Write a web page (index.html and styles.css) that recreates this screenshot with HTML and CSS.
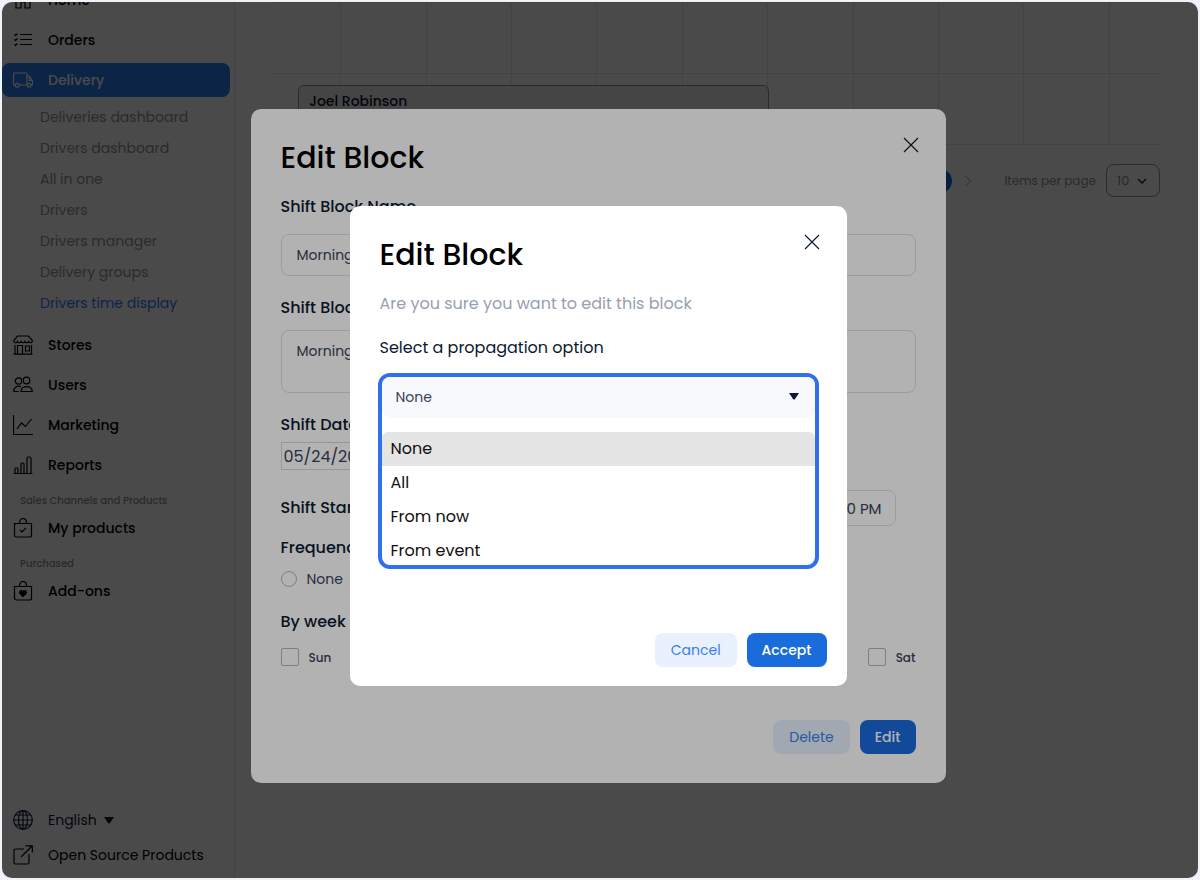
FILE: index.html
```html
<!DOCTYPE html>
<html lang="en">
<head>
    <meta charset="UTF-8">
    <meta name="viewport" content="width=device-width, initial-scale=1.0">
    <title>Drivers time display</title>
    <link rel="stylesheet" href="styles.css">
</head>
<body>
    <div class="app">
        <aside class="sidebar">
            <nav class="nav">
                <a class="nav-item" href="#">
                    <svg class="icon" viewBox="0 0 20 20"><path d="M3 8v10h5v-6h4v6h5V8M1 9l9-8 9 8"/></svg>
                    Home
                </a>
                <a class="nav-item" href="#">
                    <svg class="icon" viewBox="0 0 20 20"><path d="M7 4.500h12M7 9.500h12M7 14.500h12M1.500 4.500l1 1 2-2M1.500 9.500l1 1 2-2M1.500 14.500l1 1 2-2"/></svg>
                    Orders
                </a>
                <a class="nav-item active" href="#">
                    <svg class="icon" viewBox="0 0 20 20"><path d="M2.500 15H1.500a1 1 0 0 1-1-1V4a1 1 0 0 1 1-1H13a1 1 0 0 1 1 1v11H6M14 6h2.500l3 5v3.500h-1.500M16.500 6v4.500h3M14 15h.500"/><circle cx="4.200" cy="15.200" r="1.900"/><circle cx="16.200" cy="15.200" r="1.900"/></svg>
                    Delivery
                </a>
                <div class="subnav">
                    <a href="#">Deliveries dashboard</a>
                    <a href="#">Drivers dashboard</a>
                    <a href="#">All in one</a>
                    <a href="#">Drivers</a>
                    <a href="#">Drivers manager</a>
                    <a href="#">Delivery groups</a>
                    <a class="current" href="#">Drivers time display</a>
                </div>
                <a class="nav-item" href="#">
                    <svg class="icon" viewBox="0 0 20 20"><path d="M4.500 1h11L19.300 5.500v1a2 2 0 0 1-3.700 0 2 2 0 0 1-3.700 0 2 2 0 0 1-3.700 0 2 2 0 0 1-3.700 0 2 2 0 0 1-3.700 0v-1zM2 10v9M18.500 10v9M.500 19.200h19M4.500 19v-8.500h5V19M12.500 11h4v5h-4z"/></svg>
                    Stores
                </a>
                <a class="nav-item" href="#">
                    <svg class="icon" viewBox="0 0 20 20"><circle cx="5.500" cy="6" r="3.200"/><circle cx="13.500" cy="5.500" r="3.300"/><path d="M8 11.500c-4-1.500-7.300 1-7.300 5h5M8 16.500c0-6.500 11.300-6.500 11.300 0z"/></svg>
                    Users
                </a>
                <a class="nav-item" href="#">
                    <svg class="icon" viewBox="0 0 20 20"><path d="M.500 0v19.500H20M4 14l4.500-6 4 3.500 6-7.500"/></svg>
                    Marketing
                </a>
                <a class="nav-item" href="#">
                    <svg class="icon" viewBox="0 0 20 20"><path d="M.500 18.500h19M2 18.500v-4.500q0-1 1-1h1q1 0 1 1v4.500M8 18.500V9q0-1 1-1h1q1 0 1 1v9.500M14 18.500V3.500q0-1.500 1-1.500h1.500q1.500 0 1.500 1.500v15"/></svg>
                    Reports
                </a>
                <p class="nav-label">Sales Channels and Products</p>
                <a class="nav-item" href="#">
                    <svg class="icon" viewBox="0 0 20 20"><path d="M1.500 5.500h17V17a2 2 0 0 1-2 2h-13a2 2 0 0 1-2-2zM6.500 5c0-6 7-6 7 0M7 12l2 2 4-4"/></svg>
                    My products
                </a>
                <p class="nav-label">Purchased</p>
                <a class="nav-item" href="#">
                    <svg class="icon" viewBox="0 0 20 20"><path d="M1.500 5.500h17V17a2 2 0 0 1-2 2h-13a2 2 0 0 1-2-2zM6.500 5c0-6 7-6 7 0"/><path class="solid" d="M10 15.500l-3-3c-1.500-2 1.500-4 3-2 1.500-2 4.500 0 3 2z"/></svg>
                    Add-ons
                </a>
            </nav>
            <div class="nav-footer">
                <div class="nav-item language">
                    <svg class="icon" viewBox="0 0 20 20"><circle cx="10" cy="10" r="9.300"/><ellipse cx="10" cy="10" rx="4.500" ry="9.300"/><path d="M10 .700v18.600M.700 10h18.600M2.500 5h15M2.500 15h15"/></svg>
                    <select aria-label="Language">
                        <option>English</option>
                    </select>
                    <svg class="caret" viewBox="0 0 10 7"><path d="M0 0h10L6 6q-1 1-2 0z"/></svg>
                </div>
                <a class="nav-item" href="#">
                    <svg class="icon" viewBox="0 0 20 20"><path d="M11 4H2.500a1.500 1.500 0 0 0-1.500 1.500v12A1.500 1.500 0 0 0 2.500 19h12a1.500 1.500 0 0 0 1.500-1.500V9M8 12L19 1M12.500.800H19.300V7.500"/></svg>
                    Open Source Products
                </a>
            </div>
        </aside>

        <main class="main">
            <div class="timeline">
                <div class="slots">
                    <span></span><span></span><span></span><span></span><span></span><span></span><span></span><span></span><span></span><span></span><span></span>
                </div>
                <div class="slots">
                    <span></span><span></span><span></span><span></span><span></span><span></span><span></span><span></span><span></span><span></span><span></span>
                </div>
                <div class="block">Joel Robinson</div>
            </div>
            <div class="pagination">
                <button class="page" type="button">1</button>
                <button class="next" type="button" aria-label="Next page">
                    <svg viewBox="0 0 8 12"><path d="M1.500 1l5 5-5 5"/></svg>
                </button>
                <label for="per-page">Items per page</label>
                <div class="per-page">
                    <select id="per-page">
                        <option>10</option>
                    </select>
                    <svg viewBox="0 0 10 6"><path d="M1 1l4 4 4-4"/></svg>
                </div>
            </div>
        </main>

        <div class="overlay">
            <form class="modal modal-form">
                <div class="modal-header">
                    <h2>Edit Block</h2>
                    <button class="close" type="button" aria-label="Close">
                        <svg viewBox="0 0 16 16"><path d="M1 1l14 14M15 1L1 15"/></svg>
                    </button>
                </div>
                <label class="title" for="name">Shift Block Name</label>
                <input class="field" type="text" id="name" value="Morning">
                <label class="title" for="description">Shift Block Note</label>
                <textarea class="field" id="description">Morning</textarea>
                <label class="title" for="date">Shift Date</label>
                <input class="date" type="text" id="date" value="05/24/2023">
                <div class="time-row">
                    <label class="title" for="end">Shift Start</label>
                    <input class="field" type="text" id="end" value="05:00 PM">
                </div>
                <p class="title">Frequency</p>
                <label class="radio"><input type="radio" name="frequency">None</label>
                <p class="title">By week</p>
                <div class="days">
                    <label><input type="checkbox">Sun</label>
                    <label><input type="checkbox">Mon</label>
                    <label><input type="checkbox">Tue</label>
                    <label><input type="checkbox">Wed</label>
                    <label><input type="checkbox">Thu</label>
                    <label><input type="checkbox">Fri</label>
                    <label><input type="checkbox">Sat</label>
                </div>
                <div class="actions">
                    <button class="btn btn-light" type="button">Delete</button>
                    <button class="btn" type="button">Edit</button>
                </div>
            </form>
        </div>

        <div class="overlay overlay-top">
            <form class="modal modal-confirm">
                <div class="modal-header">
                    <h2>Edit Block</h2>
                    <button class="close" type="button" aria-label="Close">
                        <svg viewBox="0 0 16 16"><path d="M1 1l14 14M15 1L1 15"/></svg>
                    </button>
                </div>
                <p class="hint">Are you sure you want to edit this block</p>
                <label class="question" for="propagation">Select a propagation option</label>
                <div class="dropdown">
                    <div class="dropdown-field">
                        <select id="propagation">
                            <option>None</option>
                            <option>All</option>
                            <option>From now</option>
                            <option>From event</option>
                        </select>
                        <svg class="caret" viewBox="0 0 10 7"><path d="M0 0h10L6 6q-1 1-2 0z"/></svg>
                    </div>
                    <ul class="options" role="listbox" aria-label="Propagation options">
                        <li role="option" aria-selected="true">None</li>
                        <li role="option">All</li>
                        <li role="option">From now</li>
                        <li role="option">From event</li>
                    </ul>
                </div>
                <div class="actions">
                    <button class="btn btn-light" type="button">Cancel</button>
                    <button class="btn" type="button">Accept</button>
                </div>
            </form>
        </div>
    </div>
</body>
</html>
```
FILE: styles.css
```css
:root {
    --primary: #1a6bdb;
    --primary-light: #e9f1ff;
    --active: #2c7ef0;
    --ring: #3070ee;
    --navy: #0b1a33;
    --text: #3a4256;
    --muted: #96a0b0;
    --line: #e6e6e6;
    --radius: 8px;
}

* {
    margin: 0;
    padding: 0;
    box-sizing: border-box;
}

body {
    font-family: Poppins, Inter, sans-serif;
    font-size: 14px;
    line-height: 20px;
    background: #f0f2fa;
    color: #000;
    padding: 2px;
}

a {
    color: inherit;
    text-decoration: none;
}

input,
select,
textarea,
button {
    font: inherit;
    color: inherit;
    background: none;
    border: none;
}

select {
    appearance: none;
}

svg {
    display: block;
    fill: none;
    stroke: currentColor;
}

.app {
    position: relative;
    display: flex;
    height: calc(100vh - 4px);
    background: #fff;
    border-radius: 10px;
    overflow: hidden;
}

.sidebar {
    display: flex;
    flex-direction: column;
    width: 233px;
    border-right: 1px solid var(--line);
}

/* the menu is scrolled a little, so Home is cut at the top */
.nav {
    flex: 1;
    margin-top: -19px;
}

.nav-item {
    display: flex;
    align-items: center;
    gap: 15px;
    height: 34px;
    margin: 0 4px 6px 0;
    padding-left: 11px;
    border-radius: var(--radius);
    font-weight: 500;
}

.nav-item.active {
    background: var(--active);
    color: #fff;
}

.icon {
    width: 20px;
    height: 20px;
    stroke-width: 1.2;
}

.solid {
    fill: currentColor;
}

.caret {
    width: 10px;
    height: 7px;
    fill: currentColor;
    stroke: none;
}

.subnav {
    display: flex;
    flex-direction: column;
    margin: -1px 0 9px;
    padding-left: 38px;
    color: #8b93a2;
    line-height: 31px;
}

.subnav .current {
    color: var(--active);
}

.nav-label {
    margin: 11px 0 3px;
    padding-left: 18px;
    font-size: 10px;
    line-height: 15px;
    color: #8790a2;
    font-weight: 500;
}

.nav-footer {
    padding-bottom: 5px;
}

.nav-footer .nav-item {
    margin-bottom: 1px;
    font-weight: 400;
}

.language {
    color: var(--navy);
}

.language .caret {
    margin-left: -8px;
}

.main {
    flex: 1;
    padding: 0 38px 0 37px;
}

.timeline {
    position: relative;
    border-top: 1px solid var(--line);
}

.slots {
    display: grid;
    grid-template-columns: 68fr repeat(9, 85fr) 51fr;
    height: 71px;
    border-bottom: 1px solid var(--line);
}

.slots span + span {
    border-left: 1px solid var(--line);
}

.block {
    position: absolute;
    top: 82px;
    left: 26px;
    width: 53%;
    height: 50px;
    padding: 5px 10px;
    background: #ececec;
    border: 1px solid #8b93a2;
    border-radius: 6px;
    color: var(--navy);
    font-weight: 500;
}

.pagination {
    display: flex;
    align-items: center;
    justify-content: flex-end;
    gap: 10px;
    margin-top: 19px;
    color: #8b93a2;
    font-size: 12px;
}

.page {
    width: 24px;
    height: 24px;
    border-radius: 50%;
    background: var(--primary);
    color: #fff;
}

.next {
    margin-right: 20px;
    padding: 2px;
}

.next svg {
    width: 8px;
    height: 12px;
}

.per-page {
    display: flex;
    align-items: center;
    gap: 7px;
    height: 33px;
    padding: 0 12px 0 10px;
    border: 1px solid #8b93a2;
    border-radius: var(--radius);
    font-size: 13px;
}

.per-page svg {
    width: 10px;
    height: 6px;
    color: #333;
    stroke-width: 1.5;
}

.overlay {
    position: absolute;
    inset: 0;
    display: flex;
    align-items: center;
    justify-content: center;
    padding: 12px 4px 0 0;
    background: rgba(0, 0, 0, 0.58);
}

.overlay-top {
    background: rgba(0, 0, 0, 0.3);
}

.modal {
    display: flex;
    flex-direction: column;
    background: #fff;
    border-radius: 10px;
}

.modal-form {
    width: 695px;
    padding: 27px 30px 29px;
    color: var(--text);
}

.modal-confirm {
    width: 497px;
    padding: 27px 30px 19px;
}

.modal-header {
    display: flex;
    justify-content: space-between;
    color: #000;
}

.modal-header h2 {
    font-size: 30px;
    line-height: 43px;
    font-weight: 500;
}

.close {
    align-self: flex-start;
    margin: 1px -3px 0 0;
    color: var(--navy);
}

.close svg {
    width: 16px;
    height: 16px;
    stroke-width: 1.2;
}

.title {
    color: var(--navy);
    font-size: 16px;
    font-weight: 500;
}

.modal-form > .title {
    margin-top: 18px;
}

.field {
    height: 42px;
    padding: 0 15px;
    border: 1px solid #e0e0e0;
    border-radius: var(--radius);
    resize: none;
}

.modal-form > .field {
    margin: 17px 0 4px;
}

.modal-form > textarea.field {
    height: 63px;
    margin: 12px 0 4px;
    padding: 10px 15px;
}

.date {
    align-self: flex-start;
    width: 120px;
    height: 28px;
    margin-top: 7px;
    padding: 0 2px;
    border: 1px solid #d8d8d8;
    font-size: 16px;
}

.time-row {
    display: flex;
    align-items: center;
    justify-content: space-between;
    margin: 20px 20px -6px 0;
}

.time-row .field {
    width: 100px;
    height: 36px;
    padding: 0 13px;
    font-size: 15px;
    text-align: right;
}

.radio {
    display: flex;
    align-items: center;
    gap: 10px;
    margin: 11px 0 5px;
}

.radio input,
.days input {
    appearance: none;
    width: 16px;
    height: 16px;
    border: 1px solid #b0b6c2;
    border-radius: 50%;
}

.days {
    display: flex;
    justify-content: space-between;
    margin-top: 16px;
    font-size: 12px;
    font-weight: 500;
}

.days label {
    display: flex;
    align-items: flex-end;
    gap: 10px;
}

.days input {
    width: 18px;
    height: 18px;
    border-radius: 2px;
    align-self: flex-start;
}

.actions {
    display: flex;
    justify-content: flex-end;
    gap: 10px;
    margin-top: 52px;
}

.btn {
    height: 34px;
    padding: 0 15px;
    border-radius: var(--radius);
    background: var(--primary);
    color: #fff;
    font-weight: 500;
    cursor: pointer;
}

.btn-light {
    padding: 0 16px;
    background: var(--primary-light);
    color: #3a80e6;
    font-weight: 400;
}

.hint {
    margin-top: 18px;
    color: var(--muted);
    font-size: 16px;
}

.question {
    margin-top: 24px;
    color: var(--navy);
    font-size: 16px;
}

.dropdown {
    margin: 15px -2px 0;
    border: 4px solid var(--ring);
    border-radius: 12px;
    overflow: hidden;
}

.dropdown-field {
    display: flex;
    align-items: center;
    height: 41px;
    padding: 0 16px 2px 14px;
    border-radius: 0 0 var(--radius) var(--radius);
    background: #f8f9fc;
    color: var(--text);
}

.dropdown-field select {
    flex: 1;
}

.dropdown-field .caret {
    color: var(--navy);
}

.options {
    height: 133px;
    margin-top: 14px;
    list-style: none;
    font-size: 16px;
    line-height: 34px;
}

.options li {
    padding-left: 9px;
    color: #111;
}

.options li[aria-selected="true"] {
    background: #e5e5e5;
    border-radius: 6px 6px 0 0;
}

.modal-confirm .actions {
    margin: 64px -10px 0 0;
}
```
